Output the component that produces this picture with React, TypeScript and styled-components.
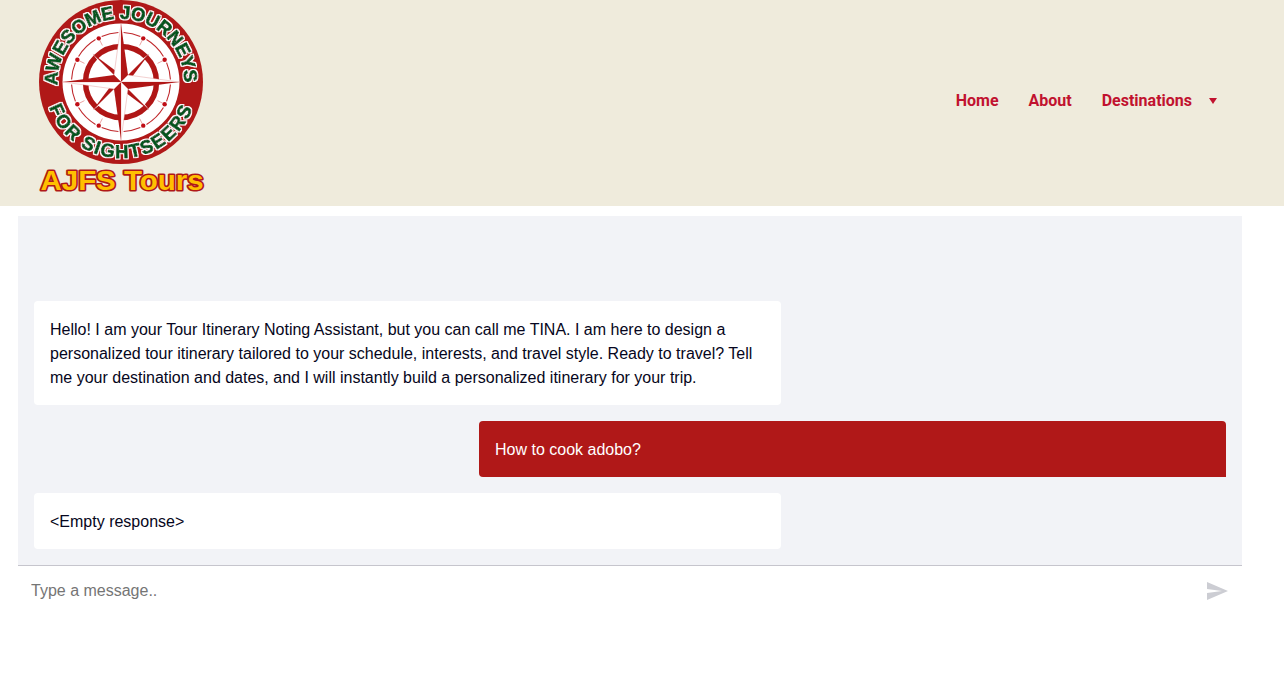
import React from "react";
import styled, { createGlobalStyle } from "styled-components";

const Global = createGlobalStyle`
  html, body { margin: 0; padding: 0; background: #fff; }
  * { box-sizing: border-box; }
`;

const Page = styled.div`
  width: 1284px;
  height: 688px;
  overflow: hidden;
  display: flex;
  flex-direction: column;
`;

const Header = styled.header`
  height: 206px;
  background: #efebdc;
  display: flex;
  align-items: flex-start;
  justify-content: space-between;
  padding-left: 38px;
  padding-right: 66px;
`;

const LogoSvg = styled.svg`
  width: 168px;
  height: 200px;
  display: block;
  flex: none;
`;

const Nav = styled.nav`
  display: flex;
  align-items: center;
  gap: 30px;
  height: 201px;
  font: 700 16px Roboto, sans-serif;
  color: #c1122f;
`;

const NavLink = styled.a`
  color: inherit;
  text-decoration: none;
  display: flex;
  align-items: center;
  gap: 17px;
`;

const Caret = styled.span`
  width: 0;
  height: 0;
  border-left: 4.5px solid transparent;
  border-right: 4.5px solid transparent;
  border-top: 6px solid #c1122f;
  margin-right: 1px;
`;

const ChatArea = styled.main`
  width: 1224px;
  margin: 10px 0 0 18px;
  display: flex;
  flex-direction: column;
`;

const MessageList = styled.div`
  height: 350px;
  background: #f2f3f7;
  border-bottom: 1px solid #c6c5cd;
  padding: 16px;
  display: flex;
  flex-direction: column;
  justify-content: flex-end;
  gap: 16px;
`;

const Bubble = styled.div<{ $mine?: boolean }>`
  width: 747px;
  padding: 17px 16px 15px;
  font: 16px/24px "Liberation Sans", Arial, sans-serif;
  border-radius: ${(p) => (p.$mine ? "4px 4px 0 4px" : "4px")};
  align-self: ${(p) => (p.$mine ? "flex-end" : "flex-start")};
  background: ${(p) => (p.$mine ? "#b01818" : "#fff")};
  color: ${(p) => (p.$mine ? "#fff" : "#060620")};
`;

const Composer = styled.div`
  height: 50px;
  display: flex;
  align-items: center;
  padding: 0 2px 0 13px;
`;

const MessageInput = styled.input`
  flex: 1;
  border: 0;
  outline: 0;
  padding: 0;
  background: transparent;
  font: 16px "Liberation Sans", Arial, sans-serif;
  color: #000;
  &::placeholder { color: #757575; opacity: 1; }
`;

const SendButton = styled.button`
  border: 0;
  background: none;
  padding: 0;
  width: 24px;
  height: 24px;
  margin-right: 11px;
  color: #cccdd3;
  display: block;
`;

const Logo = () => {
  const cx = 83;
  const cy = 82;
  const rad = (a: number) => (a * Math.PI) / 180;
  const pt = (r: number, a: number) => `${cx + r * Math.cos(rad(a))} ${cy + r * Math.sin(rad(a))}`;
  const long = [0, 90, 180, 270];
  const short = [45, 135, 225, 315];
  const dots = [27, 63, 117, 153, 207, 243, 297, 333];
  const arcs = [
    [-23, -3], [3, 23], [31, 59], [67, 87], [93, 113], [121, 149],
    [157, 177], [183, 203], [211, 239], [247, 267], [273, 293], [301, 329],
  ];
  const rTop = 63.5;
  const rBot = 76;
  const aBot = 0.3;
  return (
    <LogoSvg viewBox="0 0 168 200">
      <defs>
        <path id="topArc" d={`M ${cx - rTop} ${cy + 3} A ${rTop} ${rTop} 0 1 1 ${cx + rTop * Math.cos(0.4)} ${cy + rTop * Math.sin(0.4)}`} />
        <path id="bottomArc" d={`M ${cx - rBot * Math.cos(aBot)} ${cy + rBot * Math.sin(aBot)} A ${rBot} ${rBot} 0 0 0 ${cx + rBot * Math.cos(aBot)} ${cy + rBot * Math.sin(aBot)}`} />
        <filter id="halo" x="-10%" y="-10%" width="120%" height="120%">
          <feMorphology in="SourceAlpha" operator="dilate" radius="0.5" result="fat" />
          <feFlood floodColor="#ffffff" />
          <feComposite in2="fat" operator="in" result="white" />
          <feMerge result="merged">
            <feMergeNode in="white" />
            <feMergeNode in="SourceGraphic" />
          </feMerge>
          <feGaussianBlur in="merged" stdDeviation="0.2" />
        </filter>
        <filter id="soft"><feGaussianBlur stdDeviation="0.3" /></filter>
      </defs>
      <circle cx={cx} cy={cy} r={82} fill="#b01818" />
      <circle cx={cx} cy={cy} r={58.5} fill="#fff" />
      <g filter="url(#soft)">
        {arcs.map(([a, b]) => (
          <path key={a} d={`M ${pt(49.5, a)} A 49.5 49.5 0 0 1 ${pt(49.5, b)}`} fill="none" stroke="#c0282c" strokeWidth={1.1} />
        ))}
        {dots.map((a) => (
          <g key={a}>
            <path d={`M ${pt(49, a)} L ${pt(41, a)}`} stroke="#d66" strokeWidth={0.6} />
            <circle cx={cx + 49 * Math.cos(rad(a))} cy={cy + 49 * Math.sin(rad(a))} r={2.2} fill="#c01018" />
          </g>
        ))}
        <circle cx={cx} cy={cy} r={35.5} fill="none" stroke="#b01818" strokeWidth={5.5} />
        {short.map((a) => (
          <g key={a} transform={`rotate(${a} ${cx} ${cy})`}>
            <path d={`M${cx} ${cy} L${cx - 5} ${cy - 6} L${cx} ${cy - 40} Z`} fill="#fff" />
            <path d={`M${cx} ${cy} L${cx + 5} ${cy - 6} L${cx} ${cy - 40} Z`} fill="#b01818" />
          </g>
        ))}
        {long.map((a) => (
          <g key={a} transform={`rotate(${a} ${cx} ${cy})`}>
            <path d={`M${cx} ${cy} L${cx - 7} ${cy - 7} L${cx} ${cy - 58} Z`} fill="#fff" stroke="#d88" strokeWidth={0.4} />
            <path d={`M${cx} ${cy} L${cx + 7} ${cy - 7} L${cx} ${cy - 58} Z`} fill="#b01818" />
          </g>
        ))}
      </g>
      <g filter="url(#halo)" fontFamily="'Liberation Sans', Arial, sans-serif" fontWeight={700} fontSize={18.5} fill="#00561f" stroke="#00561f" strokeWidth={0.9} strokeLinejoin="round">
        <text letterSpacing={-0.1}>
          <textPath href="#topArc">AWESOME JOURNEYS</textPath>
        </text>
        <text letterSpacing={1.7}>
          <textPath href="#bottomArc" startOffset="50%" textAnchor="middle">FOR SIGHTSEERS</textPath>
        </text>
      </g>
      <text x={84} y={190} textAnchor="middle" textLength={163} lengthAdjust="spacingAndGlyphs" fontFamily="'Liberation Sans', Arial, sans-serif" fontWeight={700} fontSize={27} fill="#ffc000" stroke="#b01818" strokeWidth={3.2} paintOrder="stroke" strokeLinejoin="round">AJFS Tours</text>
    </LogoSvg>
  );
};

export default function App() {
  return (
    <Page>
      <Global />
      <Header>
        <Logo />
        <Nav>
          <NavLink href="#">Home</NavLink>
          <NavLink href="#">About</NavLink>
          <NavLink href="#">Destinations<Caret /></NavLink>
        </Nav>
      </Header>
      <ChatArea>
        <MessageList>
          <Bubble>Hello! I am your Tour Itinerary Noting Assistant, but you can call me TINA. I am here to design a personalized tour itinerary tailored to your schedule, interests, and travel style. Ready to travel? Tell me your destination and dates, and I will instantly build a personalized itinerary for your trip.</Bubble>
          <Bubble $mine>How to cook adobo?</Bubble>
          <Bubble>{"<Empty response>"}</Bubble>
        </MessageList>
        <Composer>
          <MessageInput placeholder="Type a message.." />
          <SendButton aria-label="Send">
            <svg width="24" height="24" viewBox="0 0 24 24" fill="currentColor"><path d="M2.01 21L23 12 2.01 3 2 10l15 2-15 2z" /></svg>
          </SendButton>
        </Composer>
      </ChatArea>
    </Page>
  );
}
